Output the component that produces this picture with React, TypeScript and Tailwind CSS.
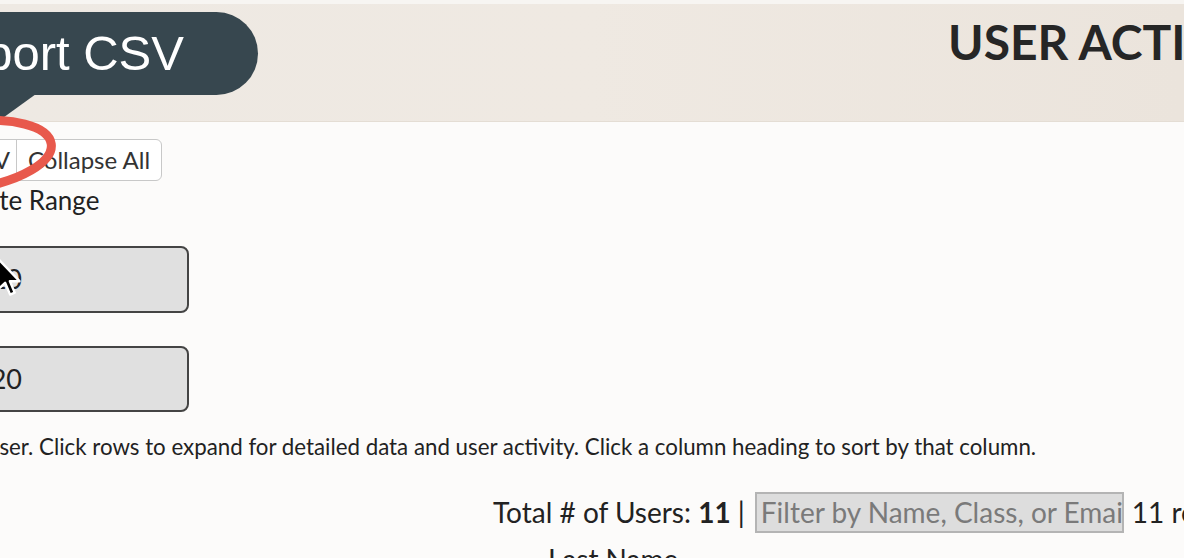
export default function App() {
  return (
    <div className="relative h-[558px] w-[1184px] overflow-hidden bg-[#fcfbfa] font-['Lato','Liberation_Sans',sans-serif] text-[#222]">
      {/* Header */}
      <div className="h-[4px] bg-[#f7f5f2]" />
      <div className="flex h-[118px] items-start border-b border-[#e4ddd4] bg-gradient-to-r from-[#eee9e3] via-[#efe9e2] to-[#ebe4dc]">
        <h1 className="mt-[8px] whitespace-nowrap pl-[948px] text-[48px] font-bold leading-[60px] text-[#262626]">
          USER ACTIVITY
        </h1>
      </div>

      {/* Controls */}
      <div className="ml-[-128px] mt-[17px] inline-flex h-[42px] rounded-md border border-[#c8c8c8] bg-white text-[24px] leading-none text-[#333]">
        <button className="flex w-[144px] items-center justify-end border-r border-[#c8c8c8] pr-[6px]">
          Export CSV
        </button>
        <button className="px-[11px]">Collapse All</button>
      </div>
      <div className="ml-[-33px] mt-[3px] text-[26px] leading-[32px]">Date Range</div>

      <div className="ml-[-200px] mt-[30px] flex h-[67px] w-[389px] items-center rounded-lg border-2 border-[#444] bg-[#e0e0e0] text-[27px]">
        <span className="inline-block w-[220px] text-right">01/01/2020</span>
      </div>
      <div className="ml-[-200px] mt-[33px] flex h-[66px] w-[389px] items-center rounded-lg border-2 border-[#444] bg-[#e0e0e0] text-[27px]">
        <span className="inline-block w-[220px] text-right">12/31/2020</span>
      </div>

      <p className="ml-[-13px] mt-[22px] whitespace-nowrap text-[22.3px] leading-[26px] text-[#222]">
        user. Click rows to expand for detailed data and user activity. Click a column heading to sort by that column.
      </p>

      <div className="mt-[31px] flex items-center whitespace-nowrap pl-[493px] text-[28px]">
        <span className="shrink-0">
          Total # of Users: <b>11</b> |
        </span>
        <div className="ml-[10px] flex h-[41px] w-[369px] shrink-0 items-center overflow-hidden border-2 border-[#b4b4b4] bg-[#dddddd] px-[4px] text-[#7a7a7a]">
          Filter by Name, Class, or Email
        </div>
        <span className="ml-[8px] shrink-0">11 records</span>
      </div>
      <div className="mt-[5px] pl-[548px] text-[28px]">Last Name</div>

      {/* Tooltip */}
      <div className="absolute left-[-100px] top-[12px] flex h-[83px] w-[358px] items-center rounded-r-[42px] bg-[#37474f] pl-[28px] font-['Liberation_Sans',sans-serif] text-[49px] text-white">
        Export CSV
      </div>
      <svg className="absolute left-0 top-[94px]" width="40" height="28">
        <polygon points="0,0 36,0 0,26" fill="#37474f" />
      </svg>

      {/* Annotation ring */}
      <svg className="absolute left-[-140px] top-[104px]" width="210" height="100">
        <ellipse
          cx="112"
          cy="51"
          rx="80"
          ry="33"
          fill="none"
          stroke="#e8594c"
          strokeWidth="9"
          transform="rotate(-8 112 51)"
        />
      </svg>

      {/* Cursor */}
      <svg className="absolute left-[-6px] top-[256px]" width="29" height="42" viewBox="0 0 13 21">
        <path
          d="M1 1 L1 17 L4.8 13.4 L7.3 19.3 L9.6 18.3 L7.2 12.6 L12 12.6 Z"
          fill="#000"
          stroke="#fff"
          strokeWidth="1.2"
          strokeLinejoin="round"
        />
      </svg>
    </div>
  );
}
